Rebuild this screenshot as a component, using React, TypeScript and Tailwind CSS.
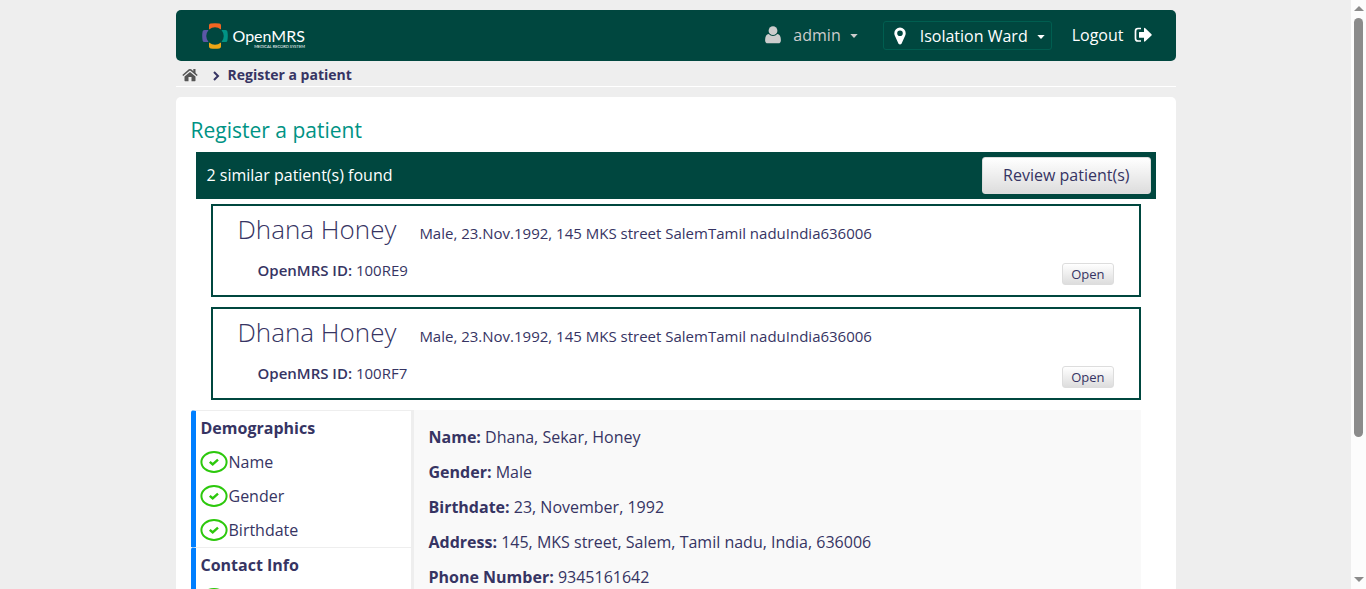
import React from "react";

type Patient = { name: string; details: string; id: string };
type Section = { title: string; items: string[] };

const patients: Patient[] = [
  { name: "Dhana Honey", details: "Male, 23.Nov.1992, 145 MKS street SalemTamil naduIndia636006", id: "100RE9" },
  { name: "Dhana Honey", details: "Male, 23.Nov.1992, 145 MKS street SalemTamil naduIndia636006", id: "100RF7" },
];

const sections: Section[] = [
  { title: "Demographics", items: ["Name", "Gender", "Birthdate"] },
  { title: "Contact Info", items: ["Address", "Phone Number"] },
];

const summary: [string, string][] = [
  ["Name", "Dhana, Sekar, Honey"],
  ["Gender", "Male"],
  ["Birthdate", "23, November, 1992"],
  ["Address", "145, MKS street, Salem, Tamil nadu, India, 636006"],
  ["Phone Number", "9345161642"],
];

function LogoMark() {
  return (
    <svg viewBox="0 0 26 26" className="h-[26px] w-[26px]" aria-hidden="true">
      <path d="M7 6.5V2.5Q7 .8 8.6.6Q13-.2 17.4.6Q19 .8 19 2.5V6.5Q13 2 7 6.5Z" fill="#f26522" />
      <path d="M7 19.5V23.5Q7 25.2 8.6 25.4Q13 26.2 17.4 25.4Q19 25.2 19 23.5V19.5Q13 24 7 19.5Z" fill="#eea616" />
      <path d="M6.5 7H2.5Q.8 7 .6 8.6Q-.2 13 .6 17.4Q.8 19 2.5 19H6.5Q2 13 6.5 7Z" fill="#5b57a6" />
      <path d="M19.5 7H23.5Q25.2 7 25.4 8.6Q26.2 13 25.4 17.4Q25.2 19 23.5 19H19.5Q24 13 19.5 7Z" fill="#009384" />
    </svg>
  );
}

function UserIcon() {
  return (
    <svg viewBox="0 0 16 18" className="h-[18px] w-4 shrink-0" fill="currentColor" aria-hidden="true">
      <circle cx="8" cy="4.7" r="4.4" />
      <path d="M3.7 7.9Q5.500 10 8 10T12.300 7.900Q15.900 8.200 15.900 14.200Q15.900 17.300 13.200 17.300H2.800Q.1 17.300.1 14.200Q.1 8.200 3.700 7.900Z" />
    </svg>
  );
}

function PinIcon() {
  return (
    <svg viewBox="0 0 12 18" className="h-[18px] w-3 shrink-0" aria-hidden="true">
      <path
        fill="currentColor"
        fillRule="evenodd"
        d="M6 .5a5.7 5.7 0 0 1 5.7 5.7c0 1.1-.3 2-.7 2.8L7.500 16.700q-1.500 1.500-3 0L1 9C.6 8.200.3 7.300.3 6.200A5.7 5.7 0 0 1 6 .5Zm0 2.900a2.800 2.800 0 1 0 0 5.600a2.800 2.800 0 0 0 0-5.600Z"
      />
    </svg>
  );
}

function LogoutIcon() {
  return (
    <svg viewBox="0 0 18 16" className="h-4 w-[18px] shrink-0" aria-hidden="true">
      <path d="M7 1.500H4Q1.500 1.500 1.500 4V11.500Q1.500 14 4 14H7" fill="none" stroke="currentColor" strokeWidth="1.700" />
      <path d="M5.500 5H10V1.500Q10.200.5 11 1L17.500 7.200Q18 7.800 17.500 8.400L11 14.600Q10.200 15 10 14V10.700H5.500Q5 10.700 5 10.200V5.500Q5 5 5.500 5Z" fill="currentColor" />
    </svg>
  );
}

function HomeIcon() {
  return (
    <svg viewBox="0 0 16 14" className="h-[14px] w-4" aria-hidden="true">
      <path d="M8 4L13.500 8.600V12.600Q13.500 13.200 12.900 13.200H9.500V9H6.500V13.200H3.100Q2.500 13.200 2.500 12.600V8.600Z" fill="currentColor" />
      <path d="M.8 7.500L7.300 2Q8 1.500 8.700 2L15.200 7.500" fill="none" stroke="currentColor" strokeWidth="1.600" />
      <path d="M11.300 1H13.500V6L11.300 4.200Z" fill="currentColor" />
    </svg>
  );
}

function Caret() {
  return (
    <svg viewBox="0 0 8 4" className="mt-0.5 h-1 w-2 shrink-0" fill="currentColor" aria-hidden="true">
      <path d="M.3 0H7.700L4 4Z" />
    </svg>
  );
}

function CheckBadge() {
  return (
    <svg viewBox="0 0 28 22" className="h-[22px] w-7 shrink-0" fill="none" stroke="#2cc80c" aria-hidden="true">
      <ellipse cx="14" cy="11" rx="12.600" ry="10" strokeWidth="2" />
      <path d="M9.800 10.800L12.700 13.400L18 8.600" strokeWidth="2.400" />
    </svg>
  );
}

function Header() {
  return (
    <header className="flex h-[51px] items-center justify-between rounded-[5px] bg-[#00473f] pr-6 pl-[26px] text-white">
      <a href="#" className="flex items-center gap-[5px]" aria-label="OpenMRS home">
        <LogoMark />
        <span className="flex flex-col items-end pt-1 font-[Lato]">
          <span className="text-base leading-[18px]">OpenMRS</span>
          <span className="text-[4px] leading-1">MEDICAL RECORD SYSTEM</span>
        </span>
      </a>
      <nav className="flex items-center">
        <button type="button" className="mr-[25px] flex items-center pb-0.5 text-[#ccc]">
          <UserIcon />
          <span className="mr-[9px] ml-3">admin</span>
          <Caret />
        </button>
        <button type="button" className="mr-5 flex h-[29px] items-center rounded-[3px] border border-[#005e50] pr-1.5 pl-2.5">
          <PinIcon />
          <span className="mr-[9px] ml-3.5">Isolation Ward</span>
          <Caret />
        </button>
        <a href="#" className="flex items-center gap-2.5 pb-0.5">
          Logout
          <LogoutIcon />
        </a>
      </nav>
    </header>
  );
}

function PatientCard({ patient }: { patient: Patient }) {
  return (
    <article className="h-[93px] border-2 border-[#00473f] px-[25px] text-[15px]">
      <div className="flex items-baseline gap-[23px] pt-[3px]">
        <h3 className="text-[26px] leading-10 font-light">{patient.name}</h3>
        <span>{patient.details}</span>
      </div>
      <div className="flex items-start justify-between pl-5">
        <p className="pt-[9px] leading-6">
          <span className="font-semibold">OpenMRS ID:</span> {patient.id}
        </p>
        <button type="button" className="mt-[14px] h-[22px] rounded-[3px] border border-[#ddd] bg-linear-to-b from-white to-[#ddd] px-2 text-[13px] leading-5">
          Open
        </button>
      </div>
    </article>
  );
}

function Scrollbar() {
  return (
    <div className="flex w-[15px] shrink-0 flex-col items-center bg-[#fcfcfc] pt-1.5 pb-[7px] text-[#8b8b8b]" aria-hidden="true">
      <svg viewBox="0 0 10 5" className="h-[5px] w-2.5" fill="currentColor"><path d="M0 5L5 0L10 5Z" /></svg>
      <div className="mt-[7px] flex-1">
        <div className="h-3/4 w-[9px] rounded-full bg-[#8b8b8b]" />
      </div>
      <svg viewBox="0 0 10 5" className="h-[5px] w-2.5" fill="currentColor"><path d="M0 0L5 5L10 0Z" /></svg>
    </div>
  );
}

export default function App() {
  return (
    <div className="flex h-screen bg-[#eee] font-['Open_Sans',sans-serif] text-base text-[#363463]">
      <div className="min-w-0 flex-1 overflow-hidden">
        <div className="mx-auto w-full max-w-[1000px] pt-2.5">
          <Header />
          <nav aria-label="Breadcrumb" className="flex h-[26px] items-center gap-3.5 border-b border-white px-1.5 pt-0.5 text-sm font-bold">
            <a href="#" aria-label="Home" className="text-[#555]"><HomeIcon /></a>
            <span className="flex items-center gap-2">
              <svg viewBox="0 0 8 10" className="mt-0.5 h-2.5 w-2" fill="none" stroke="currentColor" strokeWidth="2" aria-hidden="true"><path d="M2 1L6 5L2 9" /></svg>
              Register a patient
            </span>
          </nav>
          <main className="mt-2.5 rounded-[5px] bg-white px-[15px] pt-4">
            <h2 className="mb-1 text-[21px] leading-[35px] text-[#009384]">Register a patient</h2>
            <div className="mx-[5px] flex h-[47px] items-center justify-between bg-[#00473f] pr-[5px] pl-[11px]">
              <span className="pb-0.5 text-white">2 similar patient(s) found</span>
              <button type="button" className="h-[37px] rounded-[3px] border border-[#ddd] bg-linear-to-b from-white to-[#ddd] px-5 pb-0.5">
                Review patient(s)
              </button>
            </div>
            <div className="mx-5 mt-[5px] flex flex-col gap-2.5">
              {patients.map((p) => <PatientCard key={p.id} patient={p} />)}
            </div>
            <div className="mt-2.5 mr-5 flex bg-[#f9f9f9]">
              <nav aria-label="Form sections" className="w-[223px] shrink-0 border-r-[3px] border-[#eee] bg-white">
                {sections.map((s) => (
                  <section key={s.title} className="rounded-tl-[3px] border-t border-l-[5px] border-t-[#eee] border-l-[#007fff] pl-[5px]">
                    <h3 className="leading-[34px] font-bold">{s.title}</h3>
                    <ul>
                      {s.items.map((item) => (
                        <li key={item} className="-ml-0.5">
                          <a href="#" className="flex h-[34px] items-center gap-px pl-px leading-5"><CheckBadge />{item}</a>
                        </li>
                      ))}
                    </ul>
                  </section>
                ))}
              </nav>
              <div className="flex flex-col px-[15px] pt-2.5">
                {summary.map(([label, value]) => (
                  <p key={label} className="leading-[35px]"><span className="font-bold">{label}:</span> {value}</p>
                ))}
              </div>
            </div>
          </main>
        </div>
      </div>
      <Scrollbar />
    </div>
  );
}
